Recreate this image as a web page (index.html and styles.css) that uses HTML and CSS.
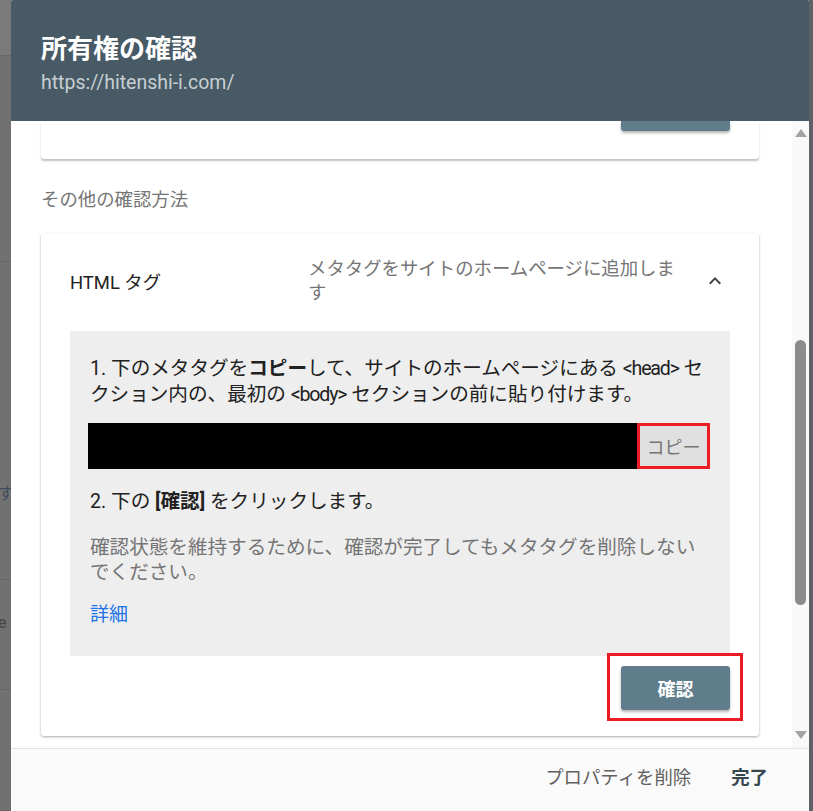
FILE: index.html
```html
<!DOCTYPE html>
<html lang="ja">
<head>
<meta charset="utf-8">
<title>所有権の確認</title>
<link rel="stylesheet" href="styles.css">
</head>
<body>
<div class="screen">
  <div class="backdrop-left">
    <div class="bg-top"></div>
    <div class="bg-block b1"></div>
    <div class="bg-block b2"><span class="bg-text">す</span></div>
    <div class="bg-block b3"><span class="bg-text e">e</span></div>
    <div class="bg-block b4"></div>
  </div>

  <div class="dialog">
    <header class="dlg-header">
      <h1 class="dlg-title">所有権の確認</h1>
      <div class="dlg-url">https://hitenshi-i.com/</div>
    </header>

    <div class="dlg-body">
      <div class="scroll-content">
        <div class="card card-cut">
          <div class="cut-btn"></div>
        </div>

        <div class="section-label">その他の確認方法</div>

        <div class="card method">
          <div class="method-head">
            <div class="method-name">HTML タグ</div>
            <div class="method-desc">メタタグをサイトのホームページに追加します</div>
            <div class="chevron">
              <svg width="24" height="24" viewBox="0 0 24 24"><path d="M7.41 15.41 12 10.83l4.59 4.58L18 14l-6-6-6 6z" fill="#424242"/></svg>
            </div>
          </div>

          <div class="instructions">
            <p class="step">1. 下のメタタグを<b>コピー</b>して、サイトのホームページにある <span class="tagname">&lt;head&gt;</span> セクション内の、最初の <span class="tagname">&lt;body&gt;</span> セクションの前に貼り付けます。</p>
            <div class="tag-row">
              <div class="tag-code"></div>
              <div class="copy-btn">コピー</div>
            </div>
            <p class="step step2">2. 下の <b>[確認]</b> をクリックします。</p>
            <p class="note">確認状態を維持するために、確認が完了してもメタタグを削除しないでください。</p>
            <a class="more" href="#">詳細</a>
          </div>

          <div class="actions">
            <button class="verify-btn">確認</button>
          </div>
        </div>
      </div>

      <div class="scrollbar">
        <div class="sb-arrow up"></div>
        <div class="sb-track"><div class="sb-thumb"></div></div>
        <div class="sb-arrow down"></div>
      </div>
    </div>

    <footer class="dlg-footer">
      <button class="text-btn">プロパティを削除</button>
      <button class="text-btn done">完了</button>
    </footer>
  </div>

  <div class="backdrop-right"></div>
</div>
</body>
</html>
```

FILE: styles.css
```css
* { box-sizing: border-box; }

html, body {
  margin: 0;
  padding: 0;
  height: 100%;
  overflow: hidden;
}

body {
  font-family: "Roboto", "Noto Sans CJK JP", sans-serif;
  background: #6f6f6f;
}

.screen {
  display: flex;
  height: 811px;
}

/* dimmed page behind the dialog */
.backdrop-left {
  width: 11px;
  flex: none;
  background: #717171;
  display: flex;
  flex-direction: column;
  overflow: hidden;
}
.bg-top { height: 56px; background: #7a7a7a; border-bottom: 1px solid #6a6a6a; }
.bg-block { border-bottom: 1px solid #656565; position: relative; }
.b1 { height: 206px; }
.b2 { height: 318px; }
.b3 { height: 110px; }
.b4 { flex: 1; }
.bg-text {
  display: block;
  font-size: 16px;
  color: #3e4a5e;
  margin-left: -2px;
  margin-top: 222px;
  line-height: 20px;
}
.bg-text.e { margin-top: 33px; color: #444; }

.backdrop-right {
  width: 4px;
  flex: none;
  background: #5e6266;
}

/* dialog */
.dialog {
  width: 798px;
  flex: none;
  display: flex;
  flex-direction: column;
  background: #fff;
  border-radius: 2px 2px 0 0;
}

.dlg-header {
  height: 121px;
  flex: none;
  background: #475a65;
  padding: 33px 30px 0;
  border-radius: 2px 2px 0 0;
}
.dlg-title {
  margin: 0;
  font-size: 26px;
  font-weight: 700;
  line-height: 32px;
  color: #fff;
}
.dlg-url {
  margin-top: 4px;
  font-size: 19.5px;
  line-height: 28px;
  color: #c7cfd3;
}

.dlg-body {
  flex: 1;
  display: flex;
  overflow: hidden;
  min-height: 0;
}

.scroll-content {
  flex: 1;
  padding: 0 33px 0 30px;
  overflow: hidden;
}

.card {
  background: #fff;
  border-radius: 3px;
  box-shadow: 0 1px 3px rgba(0,0,0,0.22), 0 1px 2px rgba(0,0,0,0.14);
}

.card-cut {
  height: 38px;
  border-radius: 0 0 3px 3px;
  box-shadow: 0 2px 2px rgba(0,0,0,0.24);
  display: flex;
  justify-content: flex-end;
  padding-right: 29px;
}
.cut-btn {
  width: 109px;
  height: 10px;
  background: #607d8b;
  border-radius: 0 0 3px 3px;
  box-shadow: 0 2px 3px rgba(0,0,0,0.3);
}

.section-label {
  margin: 28px 0 21px;
  font-size: 18.4px;
  line-height: 26px;
  color: #757575;
}

.method {
  padding: 0 29px 26px;
}

.method-head {
  display: flex;
  align-items: center;
  padding: 23px 0 26px;
}
.method-name {
  width: 238px;
  flex: none;
  font-size: 18.4px;
  color: #212121;
}
.method-desc {
  flex: 1;
  font-size: 18.4px;
  line-height: 24px;
  color: #757575;
  padding-right: 12px;
}
.chevron {
  width: 24px;
  height: 24px;
  margin-right: 3px;
  flex: none;
}
.chevron svg { display: block; }

.instructions {
  background: #eeeeee;
  padding: 25px 20px 28px;
}
.step {
  margin: 0;
  font-size: 19.6px;
  line-height: 26px;
  color: #212121;
}
.step b { font-weight: 700; }
.tagname { letter-spacing: -1.2px; }
.tag-row {
  display: flex;
  height: 46px;
  margin: 15px 0 0 -2px;
}
.tag-code {
  flex: 1;
  background: #000;
}
.copy-btn {
  width: 73px;
  flex: none;
  border: 3px solid #ed1c24;
  background: #e0e0e0;
  color: #757575;
  font-size: 18px;
  display: flex;
  align-items: center;
  justify-content: center;
}
.step2 { margin-top: 20px; }
.note {
  margin: 20px 0 0;
  font-size: 19.6px;
  line-height: 25px;
  color: #757575;
}
.more {
  display: inline-block;
  margin-top: 17px;
  font-size: 19px;
  line-height: 26px;
  color: #1a73e8;
  text-decoration: none;
}

.actions {
  display: flex;
  justify-content: flex-end;
  padding-top: 10px;
}
.verify-btn {
  position: relative;
  width: 109px;
  height: 44px;
  border: none;
  border-radius: 3px;
  background: #607d8b;
  color: #fff;
  font-family: inherit;
  font-size: 18px;
  font-weight: 700;
  box-shadow: 0 2px 3px rgba(0,0,0,0.3);
}
.verify-btn::after {
  content: "";
  position: absolute;
  top: -13px;
  left: -14px;
  right: -13px;
  bottom: -11px;
  border: 3px solid #ed1c24;
}

/* fake scrollbar */
.scrollbar {
  width: 17px;
  flex: none;
  background: #f9f9f9;
  display: flex;
  flex-direction: column;
  align-items: center;
  padding: 8px 0 9px;
}
.sb-arrow {
  width: 0;
  height: 0;
  border-left: 6px solid transparent;
  border-right: 6px solid transparent;
}
.sb-arrow.up { border-bottom: 8px solid #a3a3a3; }
.sb-arrow.down { border-top: 8px solid #a3a3a3; }
.sb-track {
  flex: 1;
  width: 100%;
  display: flex;
  justify-content: center;
  padding-top: 203px;
}
.sb-thumb {
  width: 11px;
  height: 265px;
  border-radius: 6px;
  background: #8c8c8c;
}

.dlg-footer {
  height: 63px;
  flex: none;
  background: #fafafa;
  border-top: 1px solid #e3e3e3;
  display: flex;
  justify-content: flex-end;
  align-items: flex-start;
  padding: 16px 41px 0 0;
  gap: 40px;
}
.text-btn {
  border: none;
  background: none;
  padding: 0;
  font-family: inherit;
  font-size: 18.4px;
  line-height: 26px;
  color: #616161;
}
.text-btn.done {
  color: #37474f;
  font-weight: 700;
}
```
